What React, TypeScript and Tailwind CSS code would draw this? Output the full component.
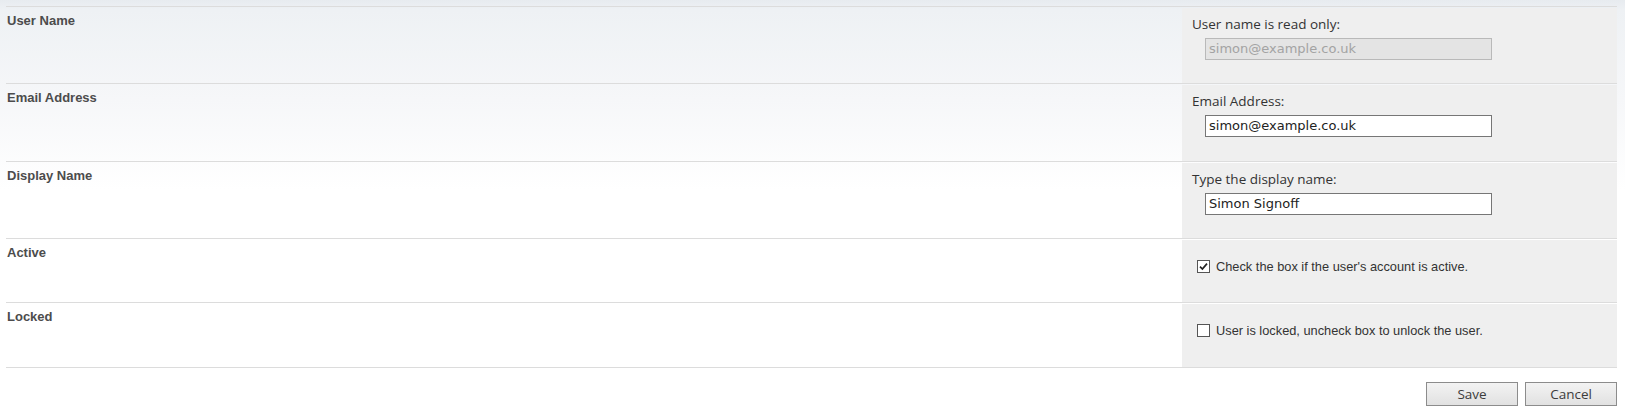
import React from "react";

type Row = {
  label: string;
  height: string;
  kind: "text" | "check";
  prompt: string;
  value?: string;
  readOnly?: boolean;
  checked?: boolean;
};

const rows: Row[] = [
  { label: "User Name", height: "h-[77px]", kind: "text", prompt: "User name is read only:", value: "simon@example.co.uk", readOnly: true },
  { label: "Email Address", height: "h-[78px]", kind: "text", prompt: "Email Address:", value: "simon@example.co.uk" },
  { label: "Display Name", height: "h-[77px]", kind: "text", prompt: "Type the display name:", value: "Simon Signoff" },
  { label: "Active", height: "h-[64px]", kind: "check", prompt: "Check the box if the user's account is active.", checked: true },
  { label: "Locked", height: "h-[65px]", kind: "check", prompt: "User is locked, uncheck box to unlock the user.", checked: false },
];

function CheckBox({ checked }: { checked?: boolean }) {
  return (
    <span className="flex h-[13px] w-[13px] shrink-0 items-center justify-center border border-[#555] bg-white">
      {checked && (
        <svg width="9" height="9" viewBox="0 0 9 9">
          <path d="M1 4.6 L3.4 7 L8 1.6" fill="none" stroke="#222" strokeWidth="1.7" />
        </svg>
      )}
    </span>
  );
}

function FieldRow({ row }: { row: Row }) {
  return (
    <div className={`flex border-t border-[#dcdcdc] ${row.height}`}>
      <div className="flex-1 pl-px pt-[6px] font-['Liberation_Sans',Arial,sans-serif] text-[13px] font-bold leading-[16px] text-[#4c4c4c]">
        {row.label}
      </div>
      <div className="mt-px w-[435px] bg-[#efefef]">
        {row.kind === "text" ? (
          <div className="pl-[10px] pt-[7px]">
            <div className="font-['Open_Sans',sans-serif] text-[13.5px] leading-[19px] text-[#333]">{row.prompt}</div>
            <div
              className={`ml-[13px] mt-[4px] flex h-[22px] w-[287px] items-center px-[3px] font-['DejaVu_Sans',Verdana,sans-serif] text-[13px] ${
                row.readOnly
                  ? "border border-[#b9b9b9] bg-[#e4e4e4] text-[#a3a3a3]"
                  : "border border-[#767676] bg-white text-[#222]"
              }`}
            >
              {row.value}
            </div>
          </div>
        ) : (
          <div className="flex items-center gap-[6px] pl-[15px] pt-[20px] font-['Liberation_Sans',Arial,sans-serif] text-[12.8px] leading-[13px] text-[#333]">
            <CheckBox checked={row.checked} />
            <span>{row.prompt}</span>
          </div>
        )}
      </div>
    </div>
  );
}

function Button({ children }: { children: React.ReactNode }) {
  return (
    <button
      type="button"
      className="h-[24px] w-[92px] border border-[#8c8c8c] bg-[linear-gradient(to_bottom,#f3f3f3,#e1e1e1)] font-['Open_Sans',sans-serif] text-[13.5px] text-[#3c3c3c]"
    >
      {children}
    </button>
  );
}

export default function App() {
  return (
    <div className="min-h-[411px] w-[1625px] bg-[linear-gradient(to_bottom,#e7ebef_0px,#eef1f4_10px,#f6f7f9_100px,#ffffff_190px)]">
      <div className="ml-[6px] w-[1611px] pt-[6px]">
        {rows.map((r) => (
          <FieldRow key={r.label} row={r} />
        ))}
        <div className="border-t border-[#dcdcdc]" />
        <div className="flex justify-end gap-[7px] pt-[14px]">
          <Button>Save</Button>
          <Button>Cancel</Button>
        </div>
      </div>
    </div>
  );
}
